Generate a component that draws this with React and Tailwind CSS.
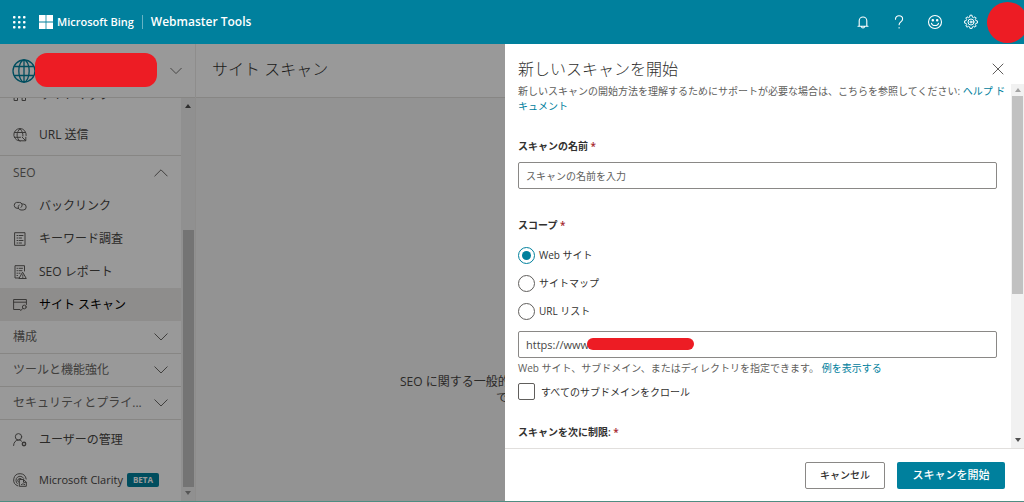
import React from "react";

const stroke = {
  fill: "none",
  stroke: "currentColor",
  strokeWidth: 1,
  strokeLinecap: "round",
  strokeLinejoin: "round",
  "aria-hidden": true,
};

function Globe({ className }) {
  return (
    <svg viewBox="0 0 24 24" className={className} {...stroke} strokeWidth="1.3">
      <circle cx="12" cy="12" r="11" />
      <ellipse cx="12" cy="12" rx="5.2" ry="11" />
      <path d="M12 1v22M2.5 7.5h19M2.5 16.5h19" />
    </svg>
  );
}

function UrlIcon() {
  return (
    <svg viewBox="0 0 14 14" className="size-3.5 text-[#605e5c]" {...stroke}>
      <path d="M8.5 12.8A6.2 6.2 0 1 1 13.2 7.5M7 .8c-4 3.500-4 9 0 12.400M7 .8c2.200 2 3.100 4.600 2.900 7.200M1.500 4.500h11M1.500 9.300h6" />
      <path d="M12.800 9.200v3.600H9.200M12.600 12.600 9.200 9.200" />
    </svg>
  );
}

function LinkIcon() {
  return (
    <svg viewBox="0 0 14 14" className="size-3.5 text-[#605e5c]" {...stroke}>
      <path d="M5.500 9.300H4A3 3 0 0 1 3.500 3.400h2.800a2.800 2.800 0 0 1 1.800 5" />
      <path d="M9.200 5h1a3 3 0 0 1 0 6H8a2.900 2.900 0 0 1-1.900-5" />
    </svg>
  );
}

function SitemapIcon() {
  return (
    <svg viewBox="0 0 14 14" className="size-3.5 text-[#605e5c]" {...stroke}>
      <path d="M5 1h4v3H5zM7 4v3M3 9.500V7h8v2.500M1.500 9.500h3v3h-3zM9.500 9.500h3v3h-3z" />
    </svg>
  );
}

function KeywordIcon() {
  return (
    <svg viewBox="0 0 14 14" className="size-3.5 text-[#605e5c]" {...stroke}>
      <path d="M2 .7h10v12.600H2zM4 3.500h.6M6 3.500h4M4 6h.6M6 6h2.500M4 8.500h.6M6 8.500h4M4 11h.6M6 11h2.500" />
    </svg>
  );
}

function ReportIcon() {
  return (
    <svg viewBox="0 0 14 14" className="size-3.5 text-[#605e5c]" {...stroke}>
      <path d="M6 13H2V.7h9.500V6M4 3.300h.5M6 3.300h3.500M4 5.700h.5M6 5.700h3M4 8.200h.5M6 8.200h1M4 10.500h.5" />
      <path d="m9.800 7.500 3.500 6H6.300zM9.800 9.800v1.500M9.800 12.400v.1" />
    </svg>
  );
}

function ScanIcon() {
  return (
    <svg viewBox="0 0 14 14" className="size-3.5 text-[#605e5c]" {...stroke}>
      <path d="M7 11.500H.6V1.500h12.800v5M.6 4.200h12.800" />
      <circle cx="11.300" cy="9" r="1.900" />
      <path d="m9.900 10.400-2.300 2.300" />
    </svg>
  );
}

function UserIcon() {
  return (
    <svg viewBox="0 0 14 14" className="size-3.5 text-[#605e5c]" {...stroke}>
      <circle cx="5.500" cy="3.800" r="3.200" />
      <path d="M.6 12.500c.1-3.200 2-5.400 4.900-5.400 1.300 0 2.300.4 3.100 1.100" />
      <circle cx="11" cy="11" r="1.700" strokeWidth="1.400" />
    </svg>
  );
}

function ClarityIcon() {
  return (
    <svg viewBox="0 0 14 14" className="size-3.5 text-[#605e5c]" {...stroke}>
      <path d="M4.800 12.900A6.300 6.300 0 1 1 13.200 6M4.200 10.500a4.200 4.200 0 1 1 6.500-5.200M5.500 9.200a2.100 2.100 0 1 1 2.900-3.300" />
      <path d="M6.700 6.500h3.900l2.700 2.700v4.100H6.700zM10.500 6.700v2.600h2.600M8.500 11.500v.2M10 10.500v1.200M11.500 11.300v.4" />
    </svg>
  );
}

function Chevron({ up = false, className = "h-2 w-3.5" }) {
  return (
    <svg viewBox="0 0 14 8" className={className} {...stroke}>
      <path d={up ? "M.8 7 7 .8 13.200 7" : "M.8 .8 7 7 13.200 .8"} />
    </svg>
  );
}

function NavItem({ icon, label, tall = false, active = false, children }) {
  return (
    <a
      href="#"
      className={`flex shrink-0 items-center gap-3 pl-[13px] ${tall ? "h-10" : "h-[33px]"} ${active ? "bg-[#edebe9] text-black" : "text-[#484644]"}`}
    >
      {icon}
      <span className="flex items-center gap-1 whitespace-nowrap">
        {label}
        {children}
      </span>
    </a>
  );
}

function NavGroup({ label, open = false }) {
  return (
    <button
      type="button"
      aria-expanded={open}
      className={`flex h-[33px] shrink-0 items-center justify-between pr-[13px] pl-[13px] text-left text-[#6b6967] ${open ? "" : "border-b border-[#e1dfdd]"}`}
    >
      <span>{label}</span>
      <Chevron up={open} />
    </button>
  );
}

function ScrollArrow({ down = false, className }) {
  return (
    <svg viewBox="0 0 6 4" className={`h-1 w-1.5 ${className}`} fill="currentColor" aria-hidden="true">
      <path d={down ? "M0 0h6L3 4z" : "M0 4h6L3 0z"} />
    </svg>
  );
}

function Header() {
  return (
    <header className="flex h-11 shrink-0 items-center overflow-hidden bg-[#00809d] pl-3 text-white">
      <button type="button" aria-label="Apps" className="mr-3">
        <svg viewBox="0 0 15 15" className="size-[15px]" fill="currentColor" aria-hidden="true">
          {[1, 6, 11].map((y) => [1, 6, 11].map((x) => <rect key={`${x}-${y}`} x={x} y={y} width="2.500" height="2.500" rx="0.800" />))}
        </svg>
      </button>
      <svg viewBox="0 0 14 14" className="mr-1 size-3.5" fill="currentColor" aria-hidden="true">
        <path d="M0 0h6.600v6.600H0zM7.400 0H14v6.600H7.400zM0 7.400h6.600V14H0zM7.400 7.400H14V14H7.400z" />
      </svg>
      <span className="text-[11px] font-semibold">Microsoft Bing</span>
      <span className="mx-2 h-3.5 w-px bg-white/40" />
      <span className="text-[12px] font-semibold">Webmaster Tools</span>
      <div className="ml-auto flex items-center gap-5">
        <button type="button" aria-label="Notifications">
          <svg viewBox="0 0 16 16" className="size-4" {...stroke} strokeWidth="1.1">
            <path d="M3 12.200h10M4.200 12V6.800a3.800 3.800 0 0 1 7.600 0V12M6.500 12.500a1.500 1.500 0 0 0 3 0" />
          </svg>
        </button>
        <button type="button" aria-label="Help">
          <svg viewBox="0 0 16 16" className="size-4" {...stroke} strokeWidth="1.1">
            <path d="M4.500 5.200C4.500 3 6 1.800 8 1.800s3.600 1.200 3.600 3.200c0 2.900-3.500 2.900-3.500 5.700M8.100 13.600v.3" />
          </svg>
        </button>
        <button type="button" aria-label="Feedback">
          <svg viewBox="0 0 16 16" className="size-4" {...stroke} strokeWidth="1.100">
            <circle cx="8" cy="8" r="6.500" />
            <path d="M4.500 9.300c1 3 6 3 7 0" />
            <circle cx="5.800" cy="6.200" r=".7" fill="currentColor" />
            <circle cx="10.200" cy="6.200" r=".7" fill="currentColor" />
          </svg>
        </button>
        <button type="button" aria-label="Settings">
          <svg viewBox="0 0 16 16" className="size-4" {...stroke}>
            <path d="m6.900 1.600-.3 1.600-1.200.5L4 2.800 2.800 4l.9 1.400-.5 1.200-1.600.3v2.200l1.600.3.5 1.200-.9 1.400L4 13.200l1.400-.9 1.200.5.3 1.600h2.200l.3-1.600 1.200-.5 1.400.9 1.200-1.200-.9-1.400.5-1.200 1.600-.3V6.900l-1.600-.3-.5-1.200.9-1.400L12 2.800l-1.400.9-1.200-.5-.3-1.600z" />
            <circle cx="8" cy="8" r="3" />
            <circle cx="8" cy="8" r="1" />
          </svg>
        </button>
      </div>
      <div className="-mr-1 ml-2 size-[41px] shrink-0 rounded-full bg-[#ed1c24]" />
    </header>
  );
}

function Sidebar() {
  return (
    <aside className="flex w-[196px] shrink-0 flex-col border-r border-[#edebe9] bg-white">
      <div className="flex h-[54px] shrink-0 items-center border-b border-[#e1dfdd] pr-[13px] pl-3">
        <Globe className="size-6 shrink-0 text-[#00809d]" />
        <div className="h-[35px] flex-1" />
        <button type="button" aria-label="Select site" className="text-[#605e5c]">
          <Chevron className="h-2 w-3" />
        </button>
      </div>
      <div className="flex min-h-0 flex-1">
        <nav className="flex min-w-0 flex-1 flex-col justify-end overflow-hidden pb-px text-[12px]">
          <NavItem tall icon={<SitemapIcon />} label="サイトマップ" />
          <div className="flex flex-col border-b border-[#e1dfdd]">
            <NavItem tall icon={<UrlIcon />} label="URL 送信" />
          </div>
          <NavGroup open label="SEO" />
          <NavItem icon={<LinkIcon />} label="バックリンク" />
          <NavItem icon={<KeywordIcon />} label="キーワード調査" />
          <NavItem icon={<ReportIcon />} label="SEO レポート" />
          <NavItem active icon={<ScanIcon />} label="サイト スキャン" />
          <NavGroup label="構成" />
          <NavGroup label="ツールと機能強化" />
          <NavGroup label="セキュリティとプライ..." />
          <NavItem tall icon={<UserIcon />} label="ユーザーの管理" />
          <NavItem tall icon={<ClarityIcon />} label={<span className="text-[11px]">Microsoft Clarity</span>}>
            <span className="rounded-xs bg-[#00809d] px-1.5 text-[8px] leading-[14px] font-bold text-white">BETA</span>
          </NavItem>
        </nav>
        <div className="flex w-3.5 flex-col items-center bg-[#f1f1f1] pt-1.5 pb-1.5">
          <ScrollArrow className="text-[#505050]" />
          <div className="mt-auto mb-1 h-[257px] w-[11px] bg-[#c1c1c1]" />
          <ScrollArrow down className="text-[#909090]" />
        </div>
      </div>
    </aside>
  );
}

function Radio({ label, checked }) {
  return (
    <label className="flex h-7 items-center gap-1 text-[10px] text-[#323130]">
      <input
        type="radio"
        name="scope"
        defaultChecked={checked}
        className="grid size-[17px] appearance-none place-items-center rounded-full border border-[#605e5c] checked:border-[#00809d] checked:before:size-[9px] checked:before:rounded-full checked:before:bg-[#00809d]"
      />
      {label}
    </label>
  );
}

function ScanPanel() {
  return (
    <section
      role="dialog"
      aria-labelledby="panel-title"
      className="absolute inset-y-0 right-0 flex w-[519px] max-w-full flex-col bg-white"
    >
      <div className="flex h-10 shrink-0 items-center justify-between pt-2.5 pr-5 pl-[13px]">
        <h2 id="panel-title" className="text-[16px] leading-6 font-light text-[#323130]">新しいスキャンを開始</h2>
        <button type="button" aria-label="閉じる" className="text-[#605e5c]">
          <svg viewBox="0 0 12 12" className="size-3" {...stroke}>
            <path d="m1 1 10 10M11 1 1 11" />
          </svg>
        </button>
      </div>
      <div className="flex min-h-0 flex-1">
        <form id="scan-form" className="min-w-0 flex-1 overflow-hidden pr-3.5 pl-[13px]">
          <p className="-mr-3 text-[10px] leading-[15px] text-[#605e5c]">
            新しいスキャンの開始方法を理解するためにサポートが必要な場合は、こちらを参照してください:{" "}
            <a href="#" className="text-[#00809d]">ヘルプ ドキュメント</a>
          </p>
          <label htmlFor="scan-name" className="mt-6 block text-[10px] leading-4 font-semibold text-[#323130]">
            スキャンの名前 <span className="text-[#a4262c]">*</span>
          </label>
          <input
            id="scan-name"
            type="text"
            placeholder="スキャンの名前を入力"
            className="mt-2 block h-[27px] w-full rounded-xs border border-[#8a8886] px-[7px] text-[10px] placeholder:text-[#605e5c]"
          />
          <fieldset className="mt-7">
            <legend className="text-[10px] leading-4 font-semibold text-[#323130]">
              スコープ <span className="text-[#a4262c]">*</span>
            </legend>
            <div className="pt-2">
              <Radio label="Web サイト" checked />
              <Radio label="サイトマップ" />
              <Radio label="URL リスト" />
            </div>
          </fieldset>
          <div className="relative mt-1.5">
            <input
              aria-label="URL"
              type="text"
              defaultValue="https://www"
              className="block h-[27px] w-full rounded-xs border border-[#8a8886] px-[7px] text-[11px] text-[#484644]"
            />
            <span className="absolute top-[7px] left-[69px] h-3 w-[107px] rounded-full bg-[#ed1c24]" />
          </div>
          <p className="mt-[3px] text-[10px] leading-[15px] text-[#605e5c]">
            Web サイト、サブドメイン、またはディレクトリを指定できます。{" "}
            <a href="#" className="text-[#00809d]">例を表示する</a>
          </p>
          <label className="mt-[7px] flex items-center gap-1.5 text-[10px] leading-4 text-[#323130]">
            <input type="checkbox" className="size-[17px] appearance-none rounded-xs border border-[#605e5c] checked:bg-[#00809d]" />
            すべてのサブドメインをクロール
          </label>
          <p className="mt-6 text-[10px] leading-4 font-semibold text-[#323130]">
            スキャンを次に制限: <span className="text-[#a4262c]">*</span>
          </p>
        </form>
        <div className="flex w-[13px] flex-col items-center bg-[#f1f1f1] pt-1 pb-1.5">
          <ScrollArrow className="text-[#a3a3a3]" />
          <div className="mt-1 mb-auto h-[198px] w-[11px] bg-[#c1c1c1]" />
          <ScrollArrow down className="text-[#505050]" />
        </div>
      </div>
      <div className="flex h-[53px] shrink-0 items-center justify-end gap-3 border-t border-[#e1dfdd] pr-[19px]">
        <button type="button" className="h-[27px] w-20 rounded-xs border border-[#8a8886] text-[10px] font-medium text-[#323130]">
          キャンセル
        </button>
        <button type="submit" form="scan-form" className="h-[27px] w-[108px] rounded-xs bg-[#00809d] text-[11px] font-medium text-white">
          スキャンを開始
        </button>
      </div>
    </section>
  );
}

export default function App() {
  return (
    <div className="flex h-screen flex-col border-b border-[#4f8c82] font-['Open_Sans','Noto_Sans_CJK_JP',sans-serif]">
      <Header />
      <div className="relative flex min-h-0 flex-1 overflow-hidden">
        <Sidebar />
        <main className="flex min-w-0 flex-1 flex-col bg-[#f5f5f5]">
          <div className="flex h-[54px] shrink-0 items-center border-b border-[#e1dfdd] bg-white pb-1 pl-4">
            <h1 className="text-[16px] font-light text-[#323130]">サイト スキャン</h1>
          </div>
          <div className="flex flex-1 justify-center pt-[276px]">
            <p className="w-[420px] text-[12px] leading-4 text-[#484644]">
              SEO に関する一般的な
              <span className="block pl-24">で</span>
            </p>
          </div>
        </main>
        <div className="absolute inset-0 bg-black/40" />
        <div className="absolute top-[9px] left-[35px] h-[34px] w-[122px] rounded-xl bg-[#ed1c24]" />
        <ScanPanel />
      </div>
    </div>
  );
}
